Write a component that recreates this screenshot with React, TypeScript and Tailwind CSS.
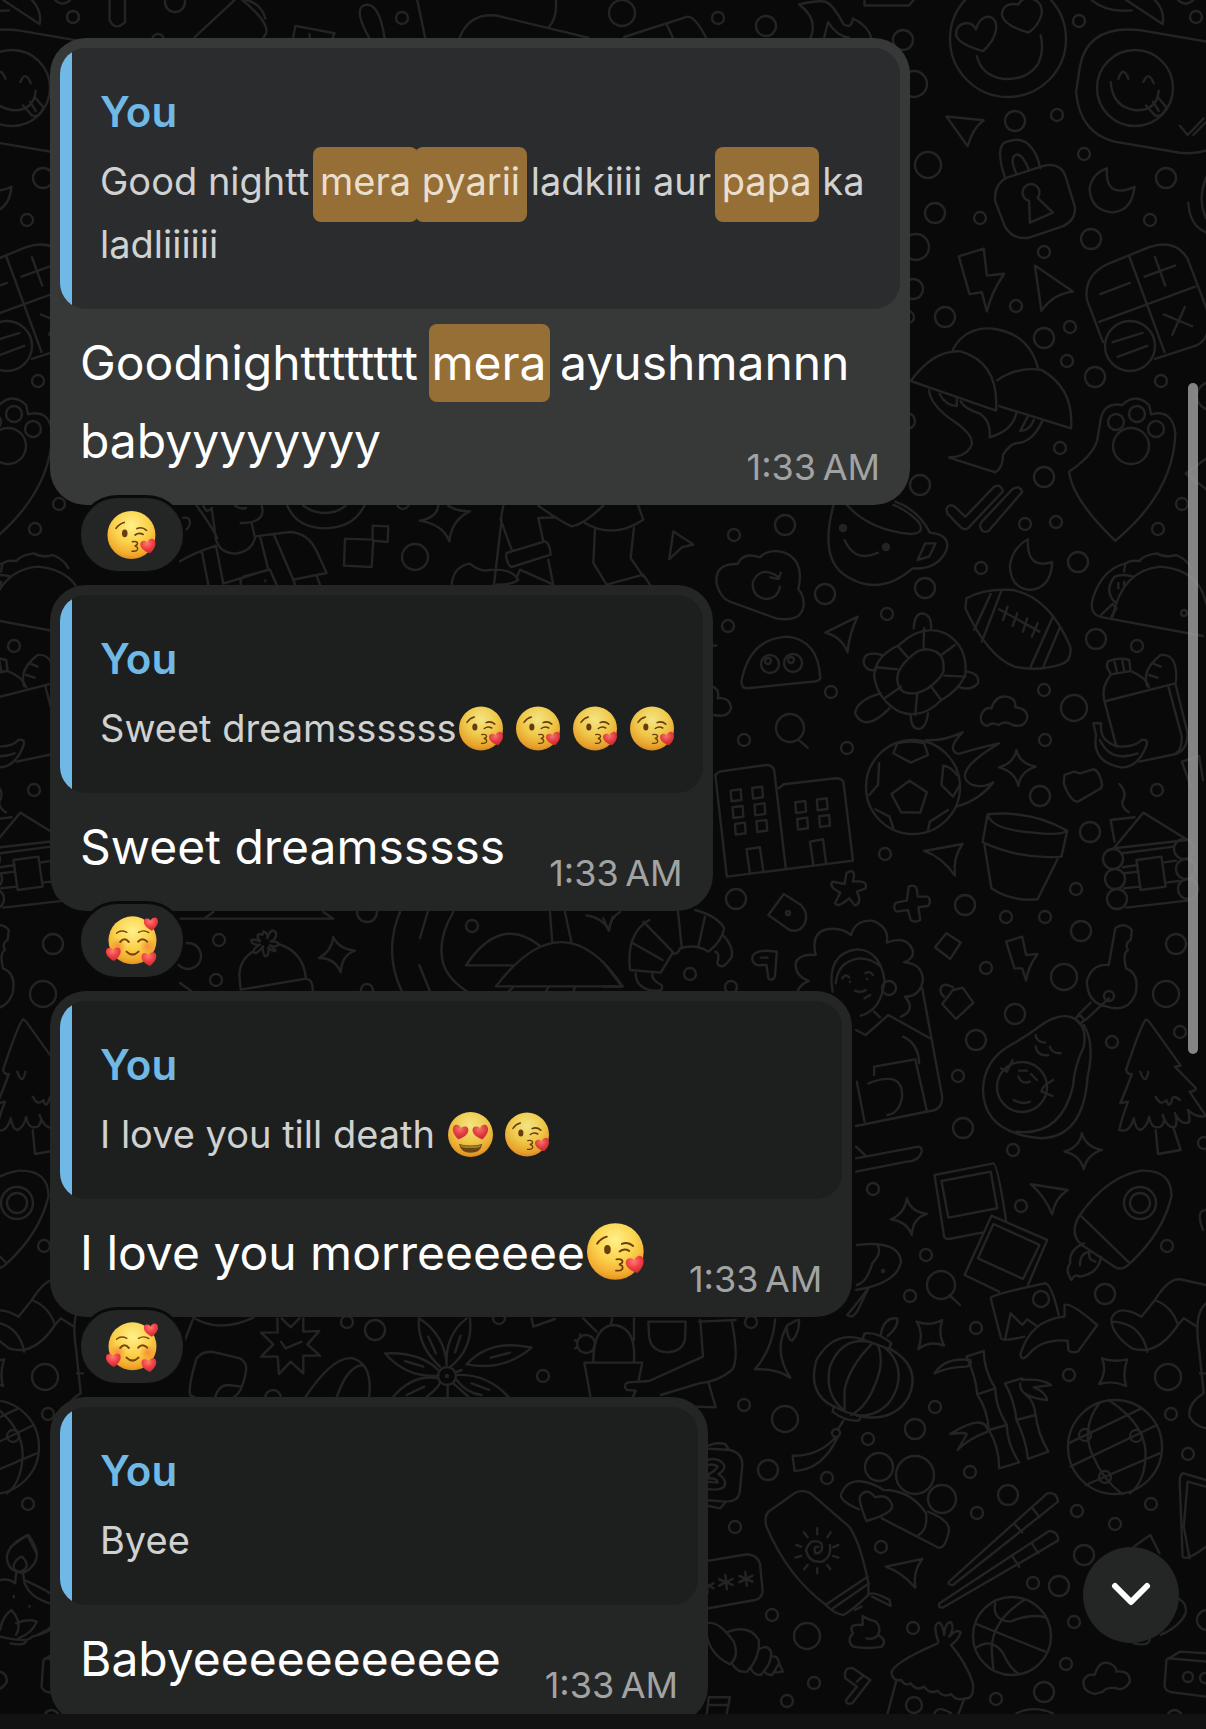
import { ReactNode } from "react";

type EmojiName = "kiss" | "heartEyes" | "hearts";

interface Message {
  id: number;
  quote: ReactNode;
  body: ReactNode;
  time: string;
  reaction?: EmojiName;
  highlighted?: boolean;
}

/* ---------- Wallpaper ---------- */

const TILE_WIDTH = 1123;

// [cx, cy, r]
const circles: number[][] = [
  [622, 13, 13], [718, 18, 6], [766, 26, 10], [903, 40, 10], [914, 84, 13], [1079, 21, 6], [1196, 17, 6], [1015, 121, 10],
  [1057, 115, 6], [928, 165, 13], [935, 213, 10], [980, 218, 6], [1084, 154, 6], [1166, 178, 10], [1150, 220, 6], [1091, 239, 10],
  [1044, 252, 6], [916, 247, 13], [913, 289, 10], [1016, 306, 6], [945, 317, 10], [1070, 327, 6], [1044, 338, 10], [1067, 361, 6],
  [1095, 377, 10], [1161, 381, 6], [1060, 448, 6], [1044, 477, 10], [920, 485, 10], [907, 421, 8], [1025, 524, 6], [1056, 522, 6],
  [1182, 504, 6], [1158, 529, 6], [1078, 562, 10], [981, 568, 6], [785, 525, 10], [734, 535, 6], [908, 317, 6], [1211, 396, 14],
  [825, 594, 10], [925, 588, 10], [887, 614, 6], [728, 626, 6], [1096, 639, 10], [1137, 646, 6], [831, 692, 6], [1044, 690, 6],
  [1074, 708, 13], [744, 740, 6], [847, 748, 6], [1045, 740, 6], [1040, 796, 10], [1157, 790, 6], [1090, 832, 10], [885, 854, 6],
  [736, 899, 10], [1076, 889, 6], [965, 905, 10], [1006, 917, 6], [1045, 917, 6], [1081, 931, 10], [1176, 944, 10], [986, 968, 6],
  [690, 974, 6], [731, 987, 6], [1064, 977, 13], [1015, 1014, 10], [1166, 994, 13], [976, 1040, 10], [1112, 1042, 6], [1180, 1032, 6],
  [958, 1076, 6], [963, 1128, 10], [1013, 1150, 6], [1204, 1143, 6], [873, 1189, 6], [1021, 1206, 6], [926, 1255, 6], [1167, 1246, 6],
  [910, 1296, 6], [1105, 1294, 10], [976, 1328, 6], [751, 1322, 6], [744, 1405, 6], [785, 1419, 13], [768, 1470, 10], [868, 1439, 6],
  [935, 1407, 6], [915, 1429, 10], [827, 1478, 6], [970, 1472, 6], [1008, 1495, 10], [977, 1513, 6], [1069, 1375, 6], [1168, 1377, 13],
  [1171, 1414, 6], [1188, 1454, 6], [1151, 1504, 6], [1077, 1511, 6], [1115, 1524, 6], [1084, 1555, 10], [1033, 1583, 6], [1059, 1586, 10],
  [735, 1527, 6], [881, 1547, 6], [772, 1615, 6], [807, 1636, 13], [913, 1628, 6], [1074, 1622, 6], [1066, 1664, 6], [996, 1699, 6],
  [1044, 1692, 10], [814, 1683, 6], [787, 1701, 6], [1207, 1620, 10], [415, 557, 13], [403, 503, 6], [219, 940, 6], [216, 980, 6],
  [188, 956, 13], [367, 912, 10], [472, 926, 6], [367, 990, 6], [347, 1322, 6], [375, 1330, 10], [499, 1318, 6], [543, 1376, 6],
  [273, 1398, 8], [73, 17, 6], [175, 2, 10], [402, 18, 6], [158, 40, 6],
  // faces, paw pads, balls, lenses and other round parts
  [1008, 39, 58], [1135, 88, 38], [1130, 346, 25], [1137, 414, 8], [1116, 422, 8], [1156, 429, 8], [1131, 446, 18], [770, 664, 9],
  [793, 663, 9], [790, 728, 14], [913, 787, 47], [1113, 859, 10], [1115, 879, 10], [1117, 899, 10], [1184, 849, 10], [1186, 869, 10],
  [1188, 889, 10], [889, 988, 7], [1109, 996, 5], [1022, 1087, 25], [1140, 1203, 16], [1140, 1203, 10], [941, 1285, 14], [1041, 1299, 8],
  [836, 1433, 4], [1115, 1447, 47], [1085, 1435, 6], [1136, 1436, 6], [1105, 1477, 6], [879, 1467, 14], [915, 1475, 19], [942, 1499, 14],
  [1012, 1636, 39], [914, 1705, 8], [1188, 1677, 5], [1205, 1678, 5], [447, 1376, 9], [447, 1376, 1], [586, 1344, 9],
  [843, 528, 3], [843, 528, 1], [886, 547, 3], [886, 547, 1], [768, 661, 3], [791, 660, 3], [788, 913, 2], [883, 1271, 1], [1184, 613, 3],
];

interface DoodleGroup {
  transform: string;
  paths: string[];
}

const doodles: DoodleGroup[] = [
  {
    transform: "matrix(.3846 0 0 .3699 0 0)",
    paths: [
      "M285 0V55Q300 85 325 60V0M505 102L610 0M640 0Q680 10 690 50M630 0Q700 60 692 90L685 102",
      "M762 102L768 70L870 90L865 102M805 102V92M960 102Q920 30 945 15Q985 0 1000 102M1085 0L1105 100",
      "M1195 102Q1220 35 1290 42L1530 102M1445 0Q1450 50 1425 75",
    ],
  },
  {
    transform: "matrix(.3846 0 0 .3699 603 0)",
    paths: [
      "M988 138Q925 120 918 95Q918 65 945 62Q962 62 970 80Q978 45 1005 45Q1025 52 1022 80Q1018 110 988 138Z",
      "M1107 88Q1042 70 1037 40Q1040 5 1080 12Q1090 -10 1120 -2Q1145 10 1140 40Q1132 70 1107 88Z",
      "M972 152Q985 205 1040 213Q1100 218 1130 175Q1148 140 1138 95",
      "M1600 118L1400 82Q1260 65 1240 180L1230 250Q1240 360 1330 383L1500 413Q1560 420 1600 390",
      "M1320 222Q1325 290 1385 298Q1440 300 1445 245M1340 213Q1352 175 1366 213M1405 222Q1418 188 1432 225",
      "M1412 285L1435 312Q1455 320 1465 290L1442 262M1430 275L1445 300M1500 340L1520 365L1562 320M1535 365L1568 330",
      "M1270 0Q1310 35 1375 28M1360 0L1455 65Q1462 30 1435 0M1495 0Q1515 20 1535 0",
      "M893 315L990 325Q962 345 948 395Z",
      "M1045 480Q1020 400 1045 385Q1090 365 1115 400Q1130 420 1137 455M1075 470Q1055 425 1075 418Q1090 415 1108 460",
      "M1050 480L1150 447Q1195 440 1205 485L1227 560Q1230 595 1195 612L1110 642Q1065 650 1045 612L1020 545Q1015 500 1050 480Z",
      "M1108 543A22 23 0 1 1 1130 535L1170 575L1110 602Z",
      "M1310 455Q1305 540 1382 505Q1375 570 1325 574Q1270 570 1265 512Q1270 470 1310 455Z",
      "M925 693L990 672L998 745L1043 740Q1010 790 998 842L985 790L953 795Z",
      "M1123 718L1222 788Q1170 795 1140 840Z",
      "M1300 925L1258 810Q1250 745 1310 715L1420 668Q1490 645 1520 700L1575 850Q1580 920 1540 935L1435 970",
      "M1368 692L1460 952M1290 870L1540 775M1293 795L1370 765M1408 748L1487 718M1435 695L1462 772M1458 850L1532 882M1513 830L1480 905M1325 925L1403 900M1338 965L1415 935",
      "M1522 548Q1525 610 1568 628M1568 480Q1545 540 1568 590",
      "M510 12Q560 0 580 5Q600 15 625 65Q645 80 650 50Q690 70 697 102M510 12Q560 50 540 102M575 102L585 60Q610 100 640 102",
      "M55 100L220 45Q240 45 268 102M165 65L182 102M680 0V15H795L808 0",
      "M910 945Q940 885 1010 888Q1110 900 1132 1000M800 1030Q860 945 930 950Q1030 980 1022 1110ZM1025 1028Q1080 990 1140 1000Q1225 1050 1217 1158L1030 1098",
      "M848 1055Q850 1090 900 1130Q975 1180 955 1210Q940 1235 900 1237L1020 1277Q1040 1265 1040 1230Q1060 1195 1085 1197Q1120 1190 1143 1137",
      "M930 1085Q940 1105 980 1118Q1010 1140 1005 1182Q1065 1165 1075 1115M875 1065Q890 1095 920 1098V1078M1105 1125L1085 1165Q1110 1165 1120 1135",
      "M1293 1140Q1300 1085 1350 1095Q1385 1060 1420 1095L1425 1120Q1480 1105 1488 1170Q1485 1330 1332 1462Q1220 1350 1212 1275Q1275 1230 1285 1190Z",
      "M893 1375Q900 1360 915 1370L942 1397L1018 1315Q1035 1308 1040 1328L950 1427Q940 1435 930 1425L895 1388ZM985 1410L1065 1322Q1085 1310 1090 1330L1003 1435Q985 1445 980 1420Z",
      "M1105 1458Q1100 1540 1168 1520Q1165 1590 1110 1595Q1060 1590 1058 1530Q1065 1480 1105 1458Z",
      "M183 1437L235 1472L205 1480L172 1512ZM1568 1240L1515 1280L1568 1322",
    ],
  },
  {
    transform: "matrix(.3846 0 0 .3333 603 480)",
    paths: [
      "M600 72Q560 240 635 290Q720 350 805 265Q870 270 893 210Q905 165 850 158Q820 90 760 65M632 72Q690 150 800 162Q840 160 820 125Q790 90 755 75",
      "M838 190H865L848 230L818 240ZM628 180Q655 250 715 218",
      "M350 252Q290 250 295 310Q305 355 330 365L450 415Q520 430 522 370Q520 340 508 328Q525 240 470 217Q430 205 408 232Q365 215 350 252Z",
      "M460 320Q455 355 425 357Q385 350 390 305Q410 255 455 290M462 278L457 297L435 292",
      "M360 605Q380 475 480 470Q560 480 565 595Q560 605 545 605L375 625Q360 625 360 605Z",
      "M578 458L662 410Q640 460 636 517Q620 470 578 458Z",
      "M705 590Q705 530 770 495Q830 430 890 460Q950 500 942 585Q925 630 880 660Q830 720 770 695Q715 660 705 590Z",
      "M765 595Q765 565 800 530Q830 495 865 515Q890 530 885 575Q875 600 845 625Q810 650 780 635Q765 620 765 595Z",
      "M835 445L833 510M915 495L880 525M942 590L887 587M878 658L852 618M812 705L817 640M732 655L775 620M710 562L765 568M768 500L792 532",
      "M722 640Q660 660 655 700Q680 760 745 685M808 445Q810 400 832 400Q855 405 853 445M725 525Q675 510 678 550Q685 575 710 570M945 575Q980 580 975 610Q955 635 922 620M800 705Q800 745 820 747Q840 745 845 700",
      "M945 355Q990 325 1065 330Q1160 350 1215 500Q1220 545 1190 553Q1130 575 1070 560Q1000 530 942 385Z",
      "M1008 342L965 450M1035 335L985 485M1170 410L1112 560M1187 445L1145 560M1030 388L1135 455M1052 380L1040 420M1077 400L1065 438M1103 415L1092 455M1130 430L1115 470",
      "M1300 412Q1260 405 1275 350Q1300 265 1360 250Q1370 240 1395 243Q1405 225 1440 220Q1460 235 1490 225Q1520 240 1530 265M1325 410Q1350 270 1450 260Q1550 270 1568 370M1300 412L1560 468",
      "M1335 370Q1300 335 1330 290Q1350 280 1380 290M1355 275L1358 250M1295 405L1325 372L1335 385L1322 410M1340 310V325M1355 305V315",
      "M1310 560L1320 583L1372 573L1368 540Q1340 530 1312 545ZM1330 545L1336 575M1350 540L1355 572",
      "M1320 585Q1295 620 1303 660L1335 800M1375 575Q1410 590 1420 622M1308 663L1488 610L1520 760Q1520 810 1490 822L1395 845M1470 620L1505 770Q1505 810 1490 820",
      "M1415 618Q1400 570 1450 525Q1495 520 1490 605M1430 550L1450 560M1420 585L1442 593",
      "M1275 730H1295Q1290 790 1345 800Q1385 800 1400 780Q1420 775 1412 800Q1390 865 1345 862Q1270 845 1282 765ZM1292 780Q1320 850 1390 820",
      "M1000 738Q975 730 985 700Q995 680 1010 685Q1020 645 1050 650Q1075 655 1072 682Q1105 685 1103 715Q1095 745 1065 735Q1045 720 1028 735Q1010 725 1000 738Z",
      "M507 778L532 803M285 620Q305 630 298 655Q330 650 333 685Q325 715 288 705M284 497H295",
      "M755 820L765 790Q800 780 835 790L845 825L800 848ZM797 902L842 937L825 998L775 997L750 942ZM885 857Q905 860 920 885M885 857L880 915L910 950L928 915M718 850L715 915L692 945M708 988L745 1010L755 1045M845 1050L850 1025L897 990",
      "M840 780Q880 785 935 757Q890 810 925 822Q970 805 1030 790Q900 880 960 915Q990 925 1015 907Q980 960 920 980",
      "M1075 810Q1082 850 1125 860Q1085 875 1080 918Q1072 875 1030 862Q1068 850 1075 810Z",
      "M1200 885L1225 875L1240 880L1275 868Q1290 870 1298 915L1295 925L1235 965Q1215 965 1198 910ZM1343 912Q1365 940 1350 965Q1350 985 1367 997",
      "M322 1190L292 885L302 875L425 855Q440 855 445 870L475 1162M322 1190L650 1142L625 905Q620 895 605 895L470 913L457 925",
      "M332 932l26-4l2 32l-26 4zM388 924l26-4l2 32l-26 4zM337 982l26-4l2 32l-26 4zM394 974l26-4l2 32l-26 4zM343 1032l26-4l2 32l-26 4zM399 1024l26-4l2 32l-26 4z",
      "M500 967l26-4l2 32l-26 4zM556 959l26-4l2 32l-26 4zM505 1017l26-4l2 32l-26 4zM562 1009l26-4l2 32l-26 4zM382 1180L373 1108L408 1102L417 1175M547 1155L538 1085L572 1078L580 1150",
      "M1000 1003Q1110 990 1207 1052L1192 1130Q1090 1140 987 1087ZM1000 1003Q1010 1050 1120 1058Q1190 1068 1207 1052M992 1097L1010 1225Q1060 1265 1130 1258L1182 1137",
      "M835 1113L935 1092Q910 1130 915 1187Q880 1130 835 1113Z",
      "M633 1180Q650 1165 653 1185L650 1205Q690 1200 683 1225L660 1235Q675 1270 655 1277L640 1255Q610 1285 603 1270L617 1238Q585 1220 597 1205L628 1212Z",
      "M795 1220Q815 1210 817 1235L818 1250H845Q855 1265 845 1278L820 1282L825 1320Q810 1330 800 1320L793 1290L762 1295Q752 1280 762 1268L790 1262Z",
      "M470 1242L515 1275Q535 1300 525 1330Q510 1360 485 1350L430 1305ZM893 1360L930 1388L903 1437L863 1402Z",
      "M1320 1020L1382 1012M1320 1020L1330 1085M1328 1105L1405 998L1520 1080L1328 1105",
      "M1350 1120L1485 1100M1352 1162L1390 1155M1455 1148L1490 1142M1355 1180L1392 1175M1355 1225L1395 1220M1463 1208L1498 1203M1360 1283L1520 1262M1387 1140L1452 1130L1463 1220L1398 1230Z",
      "M1550 828L1505 845L1530 925M1550 828L1560 900",
      "M450 1415Q390 1405 388 1435Q390 1460 415 1455L425 1455L430 1495Q440 1505 447 1490L452 1415ZM410 1433H428",
    ],
  },
  {
    transform: "matrix(.3846 0 0 .3333 603 900)",
    paths: [
      "M120 60Q60 100 70 210L150 218Q165 190 180 160Q195 165 200 145Q240 130 275 155Q310 120 315 85Q300 50 240 30M105 65L185 160M195 35L205 145M265 50L248 140M78 130L155 180",
      "M85 220Q85 265 130 272Q160 275 152 255Q125 240 128 220M312 105Q340 140 335 170Q310 215 297 190Q305 160 292 155M0 185L50 260H0M0 55L15 90L25 50",
      "M505 275Q515 250 535 243Q495 225 502 185Q515 160 553 165Q540 100 580 88Q620 80 645 105Q655 60 700 62Q745 80 738 128Q790 105 805 150Q810 175 783 187Q830 190 832 240Q825 290 785 290Q815 330 775 350",
      "M597 275Q580 160 660 148Q720 150 732 240Q725 330 670 347M605 250Q610 185 665 175Q700 175 722 200M655 272Q672 280 683 270M680 295L695 285M622 235Q630 220 640 232M682 220Q692 210 702 225M642 245V246M687 236V237",
      "M705 335L720 352M658 390L683 405L742 345L850 415M830 265L882 590Q882 630 850 633L658 678M780 410Q820 430 822 490M705 525V500L812 478L842 632M690 550Q780 510 778 590Q770 640 740 645M660 545L680 665",
      "M658 775L820 740Q835 745 825 765Q815 785 790 785L658 815M658 740L685 770",
      "M910 270L935 263L963 308L918 357L882 312ZM910 262Q885 245 878 265Q875 280 887 290",
      "M1048 125L1090 110L1100 165L1130 162Q1105 200 1100 242L1090 205H1070Z",
      "M1315 195L1332 85Q1355 65 1375 90L1372 120Q1355 130 1365 150Q1350 160 1360 205Q1395 220 1385 280Q1365 340 1310 320Q1260 310 1258 245Q1270 190 1315 195Z",
      "M1235 345L1268 308M1255 360L1315 295M1228 355L1240 345L1252 360L1240 372Z",
      "M1225 355Q1190 335 1140 375Q1100 410 1060 435Q990 480 988 570Q990 700 1140 715Q1250 710 1260 530Q1280 430 1250 375M1225 355Q1260 380 1250 440Q1225 500 1222 560Q1190 710 1075 695",
      "M1125 405Q1125 425 1150 428M1125 440Q1130 470 1158 465M1162 440Q1165 460 1190 460M1082 512H1102M1080 530Q1090 555 1110 545M1113 522L1128 540M1068 600Q1090 615 1110 605M1035 505L1050 515L1065 480M1170 540Q1140 560 1140 575L1168 588",
      "M1412 358Q1400 370 1360 510Q1365 525 1375 522Q1360 570 1345 610L1365 605Q1350 650 1342 690Q1370 700 1380 655Q1385 690 1398 690Q1415 680 1420 650Q1425 690 1450 680Q1465 665 1455 645Q1470 690 1488 680Q1495 660 1487 640Q1505 680 1525 665Q1525 640 1520 630Q1545 655 1568 648L1525 575Q1540 575 1542 565L1487 500L1502 497L1420 365Z",
      "M1437 690L1443 762L1502 750L1482 680M1397 515Q1410 560 1418 515M1437 590Q1450 620 1465 600Q1470 625 1478 605Q1480 580 1500 600",
      "M1245 700Q1255 740 1297 750Q1258 765 1250 808Q1240 765 1200 755Q1240 740 1245 700ZM790 895Q800 935 842 942Q805 955 803 1005Q790 965 748 958Q785 940 790 895Z",
      "M1048 960Q1025 790 1015 790L862 825L887 1010Q890 1018 900 1017L985 998M880 843L1008 815L1025 925L898 953ZM1105 1155L1155 1020L1010 947L940 1125L1030 1175M1015 972L1135 1035L1092 1137L975 1075Z",
      "M1113 853L1208 870Q1175 895 1168 943Q1150 890 1113 853Z",
      "M1240 945Q1310 830 1400 812Q1480 810 1478 890Q1455 1000 1370 1090L1240 945Q1210 1000 1245 1035L1330 1100Q1350 1115 1370 1090",
      "M1250 1030Q1210 1050 1215 1090Q1200 1110 1218 1140Q1225 1120 1240 1130Q1290 1120 1295 1070M1240 1095Q1240 1060 1265 1055Q1260 1080 1280 1085",
      "M660 1035Q770 1020 775 1085Q765 1150 658 1170M715 1040Q725 1060 700 1090Q685 1150 660 1155M690 1165Q640 1240 635 1245Q650 1260 665 1225L690 1165M900 1185L928 1215",
      "M1095 1310Q1040 1325 1035 1315L1008 1195Q1005 1185 1150 1150Q1165 1150 1185 1245M1045 1320L1060 1240L1090 1275L1103 1258L1130 1280",
      "M1435 1200Q1470 1135 1500 1138L1568 1155M1568 930Q1540 930 1560 990",
    ],
  },
  {
    transform: "matrix(.3846 0 0 .3333 603 1300)",
    paths: [
      "M1085 165Q1110 60 1200 50V15Q1215 5 1285 75L1235 155Q1215 160 1210 150L1208 122Q1140 115 1105 165Q1090 185 1085 165Z",
      "M1435 0L1400 50Q1340 10 1322 55Q1320 100 1375 145Q1440 170 1495 75L1510 55L1545 80M1325 65Q1400 70 1415 155M1435 0Q1480 20 1495 75",
      "M815 65Q850 80 882 60Q870 100 887 137Q850 120 820 147Q835 100 815 65ZM1297 175Q1330 188 1363 178Q1350 220 1360 258Q1325 240 1290 252Q1312 210 1297 175Z",
      "M675 118Q600 90 555 180Q530 280 600 320M745 145Q830 200 795 290Q760 365 670 350M680 100Q715 95 750 130L743 147L675 118ZM600 318L597 335Q630 365 665 362L672 348Q630 340 600 318",
      "M690 125Q620 110 590 200Q575 280 625 330M700 130Q640 200 628 270V330M715 135Q730 180 715 230Q690 320 645 345M735 145Q780 190 765 260Q740 350 660 347M722 105Q730 50 765 55Q770 80 740 108M625 362L610 390M605 412Q560 470 493 467L498 513Q570 510 610 412",
      "M945 170L990 153Q990 210 1020 265Q1020 320 1050 375Q1050 430 1082 487L1030 505Q1030 440 1003 390Q1000 330 973 283Q970 230 945 170M973 283L1020 265M1003 390L1050 375M862 220Q890 170 955 180Q960 195 945 200Q900 200 862 220",
      "M1090 235L1045 250Q1070 300 1075 360Q1100 420 1105 477L1158 455Q1130 400 1125 345Q1120 300 1100 285M1075 360L1125 345M1090 240Q1140 235 1165 255L1120 262Q1150 275 1155 300Q1080 290 1085 250M1000 390Q990 340 903 402Q950 395 945 405L922 450Q945 420 1000 395",
      "M1210 430L1400 325M1215 500L1440 375M1255 555L1447 460M1290 310Q1240 390 1275 470Q1300 540 1350 582M1315 300Q1420 380 1410 480Q1405 550 1370 580",
      "M665 628Q610 600 620 580Q640 520 715 560L730 570Q800 570 840 640Q845 690 820 705M725 655L870 742Q890 750 900 690Q900 660 845 635M685 663Q665 610 668 590Q685 560 708 592Q740 580 752 615Q755 640 685 663Z",
      "M430 635L500 578Q520 568 540 580L640 680Q670 730 690 850V885Q650 930 625 945Q600 940 580 915Q480 830 425 680Q418 650 430 635ZM582 912L688 830M598 925L692 850M690 885Q700 870 745 900L748 918L700 890M655 930L672 920",
      "M560 740Q545 740 552 760Q575 760 568 730Q540 710 528 750Q535 790 570 785Q595 770 590 735M557 685V703M522 697L532 712M592 697L583 712M502 735L515 740M612 735L598 742M500 773L515 768M612 773L598 768M523 808L532 795M591 808L583 795M557 820V805",
      "M260 785L375 763Q400 765 408 790L415 870Q415 895 395 900L260 928M318 825L322 868M302 838L337 855M302 857L337 837M370 815L374 858M354 828L389 845M354 847L389 827M268 835L272 878M262 850L287 865M262 868L287 850",
      "M260 445L330 450Q365 460 362 500L355 580Q350 605 320 605L262 600M270 440Q290 425 318 432L328 450M262 615L305 625L318 607M270 480Q300 470 315 495Q318 510 300 522Q325 540 315 560Q300 575 265 565M272 495Q290 490 298 500Q290 515 275 522V535Q298 535 298 548L265 545",
      "M735 800L830 777Q805 815 812 863Q775 815 735 800Z",
      "M900 845L1155 580Q1180 575 1183 605L910 855Q895 855 900 845ZM875 910L1160 693Q1185 695 1183 722L885 922Q870 925 875 910ZM1115 622L1135 652M1068 670L1090 697M1115 730L1132 760M1065 770L1082 800",
      "M970 972L1150 1055M1020 910Q1010 960 1060 965Q1110 940 1150 952M1095 900Q1000 970 1012 1070L1015 1110M968 1045Q1010 1010 1040 1060Q1060 1110 1080 1120",
      "M675 948Q690 960 710 965Q725 985 715 1005Q740 1020 725 1040Q690 1048 650 1040Q632 1020 650 1000Q635 970 675 975ZM685 1015Q705 1020 715 1005",
      "M270 970Q300 960 340 1025Q355 1070 330 1093Q270 1060 268 985ZM320 998Q380 970 405 1020Q410 1070 375 1115Q350 1120 335 1090M405 1050Q425 1030 437 1055Q440 1090 410 1125Q390 1125 385 1105M437 1070Q455 1065 458 1090L440 1125Q425 1125 420 1115M458 1090L468 1115L445 1118",
      "M630 1135Q625 1100 650 1105L695 1140L648 1210Q630 1215 632 1200L660 1160ZM660 1145L675 1130",
      "M870 1030Q750 1090 750 1120Q755 1145 775 1140Q785 1160 800 1150Q815 1175 835 1160Q850 1185 870 1172Q885 1195 905 1182Q920 1205 940 1195Q965 1200 962 1150Q945 1090 905 1035M872 1025Q855 970 875 968Q885 980 887 1005Q890 965 905 967Q915 985 900 1010Q920 985 930 997Q925 1020 905 1035",
      "M762 1145L740 1240M938 1200L925 1240M862 1240Q870 1215 905 1240M1075 1240Q1120 1215 1170 1240M1470 1240Q1485 1220 1503 1240",
      "M1280 1182Q1245 1175 1250 1140Q1260 1120 1278 1125Q1290 1085 1310 1088Q1335 1095 1335 1115Q1370 1110 1370 1145Q1355 1175 1335 1165Q1310 1160 1300 1175Z",
      "M1568 1060L1500 1055L1465 1080L1460 1160Q1465 1175 1480 1177L1568 1190M1470 1075L1568 1085",
      "M1568 540L1510 520Q1497 520 1500 560L1507 770Q1515 785 1568 740M1568 560L1520 545L1510 680L1525 775M1568 10Q1535 40 1550 150L1562 280Q1520 310 1525 350Q1540 380 1568 385M1552 220H1568",
      "M1380 740L1423 705L1447 760M1495 895Q1520 910 1515 940Q1500 980 1450 1005M1380 1030Q1415 1040 1422 1020",
      "M118 65H215L213 120Q205 155 168 157Q125 155 120 110ZM250 65L345 60M253 60L260 170L120 243L65 247Q50 255 62 270L85 272L78 290M335 65Q355 180 335 210Q300 245 250 250L150 285M275 250L293 322L240 320",
      "M448 58Q440 150 395 208Q450 205 487 233Q440 150 480 75L505 60M478 85Q480 120 492 122Q510 100 510 60M270 1240L275 1192H330L322 1240M272 1215H325",
    ],
  },
  {
    transform: "matrix(.3333 0 0 .3333 180 503)",
    paths: [
      "M322 8Q350 75 435 76Q520 75 553 8M370 8Q400 30 435 30Q470 30 497 8",
      "M50 8Q95 70 112 105M95 15L108 110Q120 150 165 152Q215 145 225 105L215 60M245 8Q260 60 182 60M165 8Q180 20 198 15M70 8Q80 35 95 15M8 45Q30 40 30 60Q25 80 15 80",
      "M0 175Q40 150 108 128L130 242L265 200L240 100M225 100L330 87Q385 90 410 145L440 210L340 230L282 95M65 143L85 245M182 245Q180 220 200 218L270 200L290 245M410 218L420 245M340 230L345 245M256 232V234",
      "M495 107L580 110L575 192L492 188ZM578 68L625 70L623 117L578 113ZM720 53Q770 45 775 8M805 8Q830 25 870 25Q815 50 808 115Q790 65 720 53",
      "M815 245Q820 190 870 182Q890 200 915 203Q990 190 1015 230Q1000 245 950 245M970 8L962 50L995 140M965 50L942 245M980 150L1095 115Q1110 120 1112 155L995 192Q985 190 978 160Z",
      "M1075 8Q1140 55 1175 70Q1210 65 1270 8M1130 43L1075 45L1090 115M1105 170L1120 245L1020 200L1010 225M1215 60Q1300 110 1390 50L1375 8M1245 80L1240 180L1280 245L1390 215L1410 245M1362 75L1352 165L1390 220",
    ],
  },
  {
    transform: "matrix(.3333 0 0 .3333 180 908)",
    paths: [
      "M0 32H460L430 12M75 30L100 12M0 225L35 250M220 130Q180 155 178 200L182 245L378 212Q370 130 295 108M378 212Q400 215 398 250",
      "M250 70Q265 75 262 90Q275 55 288 75Q290 95 272 100Q300 100 295 112Q280 118 270 112Q290 125 285 130Q268 125 265 118Q268 145 255 145Q245 130 250 115Q225 145 220 130Q225 115 240 110Q210 110 215 95Q235 95 240 100Q225 80 240 78Q250 85 250 70",
      "M460 87Q475 122 525 128Q485 142 482 193Q465 150 417 150Q455 130 460 87Z",
      "M660 12Q610 130 665 250M743 12L720 90M820 12Q780 80 785 135Q785 200 860 250M718 172L750 250M997 172H858Q960 20 1078 112M948 235H1328Q1150 -30 948 235Z",
      "M1110 12L1117 105M1155 12L1175 105M1000 238L985 250M1105 238L1098 250M1185 238L1180 250M1220 22Q1270 30 1287 68Q1290 30 1320 12",
    ],
  },
  {
    transform: "matrix(.3333 0 0 .3333 180 1315)",
    paths: [
      "M40 8Q120 55 220 8M38 15L15 75M45 248L30 240Q25 210 50 130Q70 105 105 112L180 130Q205 145 197 175Q185 235 160 248M105 248Q115 210 145 210L185 215",
      "M292 10L293 52L243 53L280 88L243 125H293L297 177L332 140L370 175V122H420L382 88L418 48L370 50V10M305 10L332 37L358 10M303 80L317 100L365 80",
      "M375 248Q460 120 520 130Q580 150 567 248M470 248Q500 155 548 150",
      "M780 155Q710 90 717 10Q795 60 800 150Q795 60 860 10M812 155Q880 100 870 10M775 182Q680 190 615 115Q720 110 775 165M860 148Q930 70 1055 98Q970 170 860 148Z",
      "M640 245Q700 175 775 190M740 245Q780 215 780 200M828 180Q920 175 985 245M830 195Q860 235 905 240M820 205L865 245M803 210V245M745 65L768 115M842 62L825 112M675 138L730 155M680 240L733 215M875 205L928 225M932 128L990 113M845 165L825 172",
      "M1055 10L1060 35L1125 12M1240 140Q1240 30 1305 30Q1370 40 1362 140M1375 200L1387 143H1213L1232 248M1185 75L1192 80M1185 100L1192 97M1200 58L1203 66M1210 10L1250 50M1297 10L1293 28M1362 10V75",
    ],
  },
];

// oil lamp that only shows along the left edge
const lampPath =
  "M15 920Q20 880 62 855Q90 910 75 940Q60 970 45 968Q15 960 15 920ZM30 945Q35 925 48 920Q70 950 45 965Q28 965 30 945M35 970L33 1000M50 970L52 985M0 990Q20 985 33 1000M52 990Q100 1020 108 1030M52 990Q60 1040 108 1060M0 1140Q5 1100 25 1080Q50 1120 35 1155M35 1120Q60 1105 80 1115Q70 1150 40 1165M0 1160Q60 1180 70 1160Q100 1150 108 1140M30 1038V1042M64 1068V1070";

const Wallpaper = () => (
  <svg className="absolute inset-0 h-full w-full" viewBox="0 0 1206 1714" preserveAspectRatio="xMinYMin slice" fill="none" stroke="#242424" strokeWidth="2.4" strokeLinecap="round" strokeLinejoin="round" aria-hidden="true">
    <g id="doodles">
      {circles.map(([cx, cy, r], index) => (
        <circle key={index} cx={cx} cy={cy} r={r} />
      ))}
      {doodles.map((group) => (
        <g key={group.transform} transform={group.transform}>
          {group.paths.map((d) => (
            <path key={d} d={d} vectorEffect="non-scaling-stroke" />
          ))}
        </g>
      ))}
    </g>
    <use href="#doodles" x={-TILE_WIDTH} />
    <path d={lampPath} transform="matrix(.4592 0 0 .3333 0 1250)" vectorEffect="non-scaling-stroke" />
  </svg>
);

/* ---------- Emoji ---------- */

const EmojiDefs = () => (
  <svg className="absolute h-0 w-0" aria-hidden="true">
    <defs>
      <radialGradient id="face" cx="0.5" cy="0.3" r="0.72">
        <stop offset="0" stopColor="#fff08a" />
        <stop offset="0.5" stopColor="#fbd34d" />
        <stop offset="0.85" stopColor="#f2a92c" />
        <stop offset="1" stopColor="#dd8a1e" />
      </radialGradient>
      <radialGradient id="heart" cx="0.45" cy="0.25" r="0.8">
        <stop offset="0" stopColor="#ff7a73" />
        <stop offset="0.5" stopColor="#ee3f43" />
        <stop offset="1" stopColor="#c9252f" />
      </radialGradient>
      <radialGradient id="blush">
        <stop offset="0" stopColor="#f4702f" stopOpacity="0.6" />
        <stop offset="1" stopColor="#f4702f" stopOpacity="0" />
      </radialGradient>
    </defs>
  </svg>
);

const Heart = ({ x, y, size, tilt = 0 }: { x: number; y: number; size: number; tilt?: number }) => (
  <path d="M0 10C-14 2 -12 -9 -6 -9C-2 -9 0 -6 0 -5C0 -6 2 -9 6 -9C12 -9 14 2 0 10Z" transform={`translate(${x} ${y}) rotate(${tilt}) scale(${size / 20})`} fill="url(#heart)" />
);

const Kiss = ({ className }: { className: string }) => (
  <svg className={className} viewBox="0 0 176 172" role="img" aria-label="😘">
    <circle cx="86" cy="86" r="86" fill="url(#face)" />
    <g fill="none" stroke="#6b3d0c" strokeWidth="6" strokeLinecap="round">
      <path d="M31 62Q42 46 60 41" />
      <path d="M106 63Q124 55 140 69" />
      <path d="M99 86Q113 75 128 84" />
      <path d="M89 110Q106 107 108 116Q107 124 97 125Q110 128 108 138Q104 146 88 144" strokeWidth="5" />
    </g>
    <ellipse cx="62" cy="80" rx="10" ry="14" fill="#6b3d0c" />
    <Heart x={147} y={126} size={52} tilt={-14} />
  </svg>
);

const HeartEyes = ({ className }: { className: string }) => (
  <svg className={className} viewBox="0 0 134 134" role="img" aria-label="😍">
    <circle cx="67" cy="67" r="67" fill="url(#face)" />
    <path d="M33 95Q67 104 102 95Q98 121 67 121Q38 121 33 95Z" fill="#74480f" />
    <path d="M37 98Q67 106 98 98L96 104Q67 111 39 104Z" fill="#a5873b" />
    <Heart x={36} y={60} size={44} tilt={12} />
    <Heart x={98} y={60} size={44} tilt={-12} />
  </svg>
);

const SmilingHearts = ({ className }: { className: string }) => (
  <svg className={className} viewBox="76 80 158 150" role="img" aria-label="🥰">
    <circle cx="155" cy="153" r="72" fill="url(#face)" />
    <circle cx="112" cy="170" r="24" fill="url(#blush)" />
    <circle cx="200" cy="170" r="24" fill="url(#blush)" />
    <g fill="none" stroke="#7a430c" strokeWidth="6" strokeLinecap="round">
      <path d="M118 158Q131 142 144 158" />
      <path d="M172 157Q185 142 199 157" />
      <path d="M107 132Q120 120 138 129" strokeWidth="4" />
      <path d="M173 129Q190 120 204 130" strokeWidth="4" />
      <path d="M137 187Q155 205 173 187" />
    </g>
    <Heart x={211} y={104} size={40} tilt={-6} />
    <Heart x={98} y={194} size={42} tilt={-4} />
    <Heart x={205} y={209} size={42} tilt={-6} />
  </svg>
);

const QuoteEmoji = ({ name }: { name: EmojiName }) => {
  const className = "mr-[10px] ml-[2px] inline-block h-[45px] w-[45px] align-[-9px] opacity-95";
  return name === "heartEyes" ? <HeartEyes className={className} /> : <Kiss className={className} />;
};

/* ---------- Messages ---------- */

const Mark = ({ children }: { children: ReactNode }) => <mark className="-mx-[7px] rounded-lg bg-[#966f37] px-[7px] pt-[11px] pb-[18px] text-[#eadfce]">{children}</mark>;

const messages: Message[] = [
  {
    id: 1,
    highlighted: true,
    quote: (
      <>
        Good nightt <Mark>mera</Mark> <Mark>pyarii</Mark> ladkiiii aur <Mark>papa</Mark> ka ladliiiiii
      </>
    ),
    body: (
      <>
        Goodnightttttttt <mark className="-mx-[3px] rounded-lg bg-[#966f37] px-[3px] pt-[9px] pb-[10px] text-white">mera</mark> ayushmannn babyyyyyyyy
      </>
    ),
    time: "1:33\u202fAM",
    reaction: "kiss",
  },
  {
    id: 2,
    quote: (
      <>
        Sweet dreamssssss
        <QuoteEmoji name="kiss" />
        <QuoteEmoji name="kiss" />
        <QuoteEmoji name="kiss" />
        <QuoteEmoji name="kiss" />
      </>
    ),
    body: "Sweet dreamsssss",
    time: "1:33\u202fAM",
    reaction: "hearts",
  },
  {
    id: 3,
    quote: (
      <>
        I love you till death <QuoteEmoji name="heartEyes" />
        <QuoteEmoji name="kiss" />
      </>
    ),
    body: (
      <>
        I love you morreeeeee
        <Kiss className="ml-[2px] inline-block h-[57px] w-[58px] align-[-10px]" />
      </>
    ),
    time: "1:33\u202fAM",
    reaction: "hearts",
  },
  { id: 4, quote: "Byee", body: "Babyeeeeeeeeeee", time: "1:33\u202fAM" },
];

const MessageBubble = ({ message }: { message: Message }) => (
  <li className="flex flex-col items-start">
    <article className={`w-fit max-w-[860px] rounded-[36px] p-[10px] pb-[25px] ${message.highlighted ? "bg-[#373838]" : "bg-[#242626]"}`}>
      <blockquote className={`flex overflow-hidden rounded-[26px] ${message.highlighted ? "bg-[#2b2c2d]" : "bg-[#1d1f1e]"}`}>
        <span className="w-3 shrink-0 bg-[#70b9e6]" />
        <div className="pt-[39px] pr-[17px] pb-[33px] pl-7">
          <p className="mb-[13px] text-[42px] leading-[50px] font-semibold text-[#70b9e6]">You</p>
          <p className="text-[38px] leading-[63px] text-[#d0d1d1]">{message.quote}</p>
        </div>
      </blockquote>
      <div className="pt-[15px] pr-5 pl-5 text-[48px] leading-[78px] text-white">
        {message.body}
        <time className="float-right mt-[45px] -mb-2 ml-11 text-[36px] leading-10 text-[#a2a3a3]">{message.time}</time>
      </div>
    </article>

    {/* Reaction pill */}
    {message.reaction && (
      <button className="-mt-[10px] mb-[11px] ml-7 flex h-[79px] w-[108px] items-center justify-center rounded-full border-3 border-[#0a0a0a] bg-[#242626]" aria-label="Reactions">
        {message.reaction === "kiss" ? <Kiss className="h-[48px] w-[50px]" /> : <SmilingHearts className="h-[50px] w-[53px]" />}
      </button>
    )}
  </li>
);

const App = () => {
  return (
    <div className="flex h-screen flex-col overflow-hidden bg-[#121212] font-['Inter','Liberation_Sans',sans-serif]">
      <EmojiDefs />
      <main className="relative min-h-0 flex-1 overflow-hidden bg-[#090909]">
        <Wallpaper />
        <ul className="relative flex flex-col pt-[38px] pl-[50px]">
          {messages.map((message) => (
            <MessageBubble key={message.id} message={message} />
          ))}
        </ul>

        {/* Scroll thumb */}
        <div className="absolute top-[383px] right-2 h-[671px] w-[10px] rounded-full bg-[#9a9a9a]/85" />

        {/* Jump to latest */}
        <button className="absolute right-[27px] bottom-[71px] flex h-24 w-24 items-center justify-center rounded-full bg-[#242626]" aria-label="Scroll to bottom">
          <svg className="h-7 w-10" viewBox="0 0 40 28" fill="none" stroke="#fff" strokeWidth="6" strokeLinecap="round" strokeLinejoin="round">
            <path d="M4 5L20 21L36 5" />
          </svg>
        </button>
      </main>
      <footer className="h-[15px] shrink-0 bg-[#121212]" />
    </div>
  );
};

export default App;
